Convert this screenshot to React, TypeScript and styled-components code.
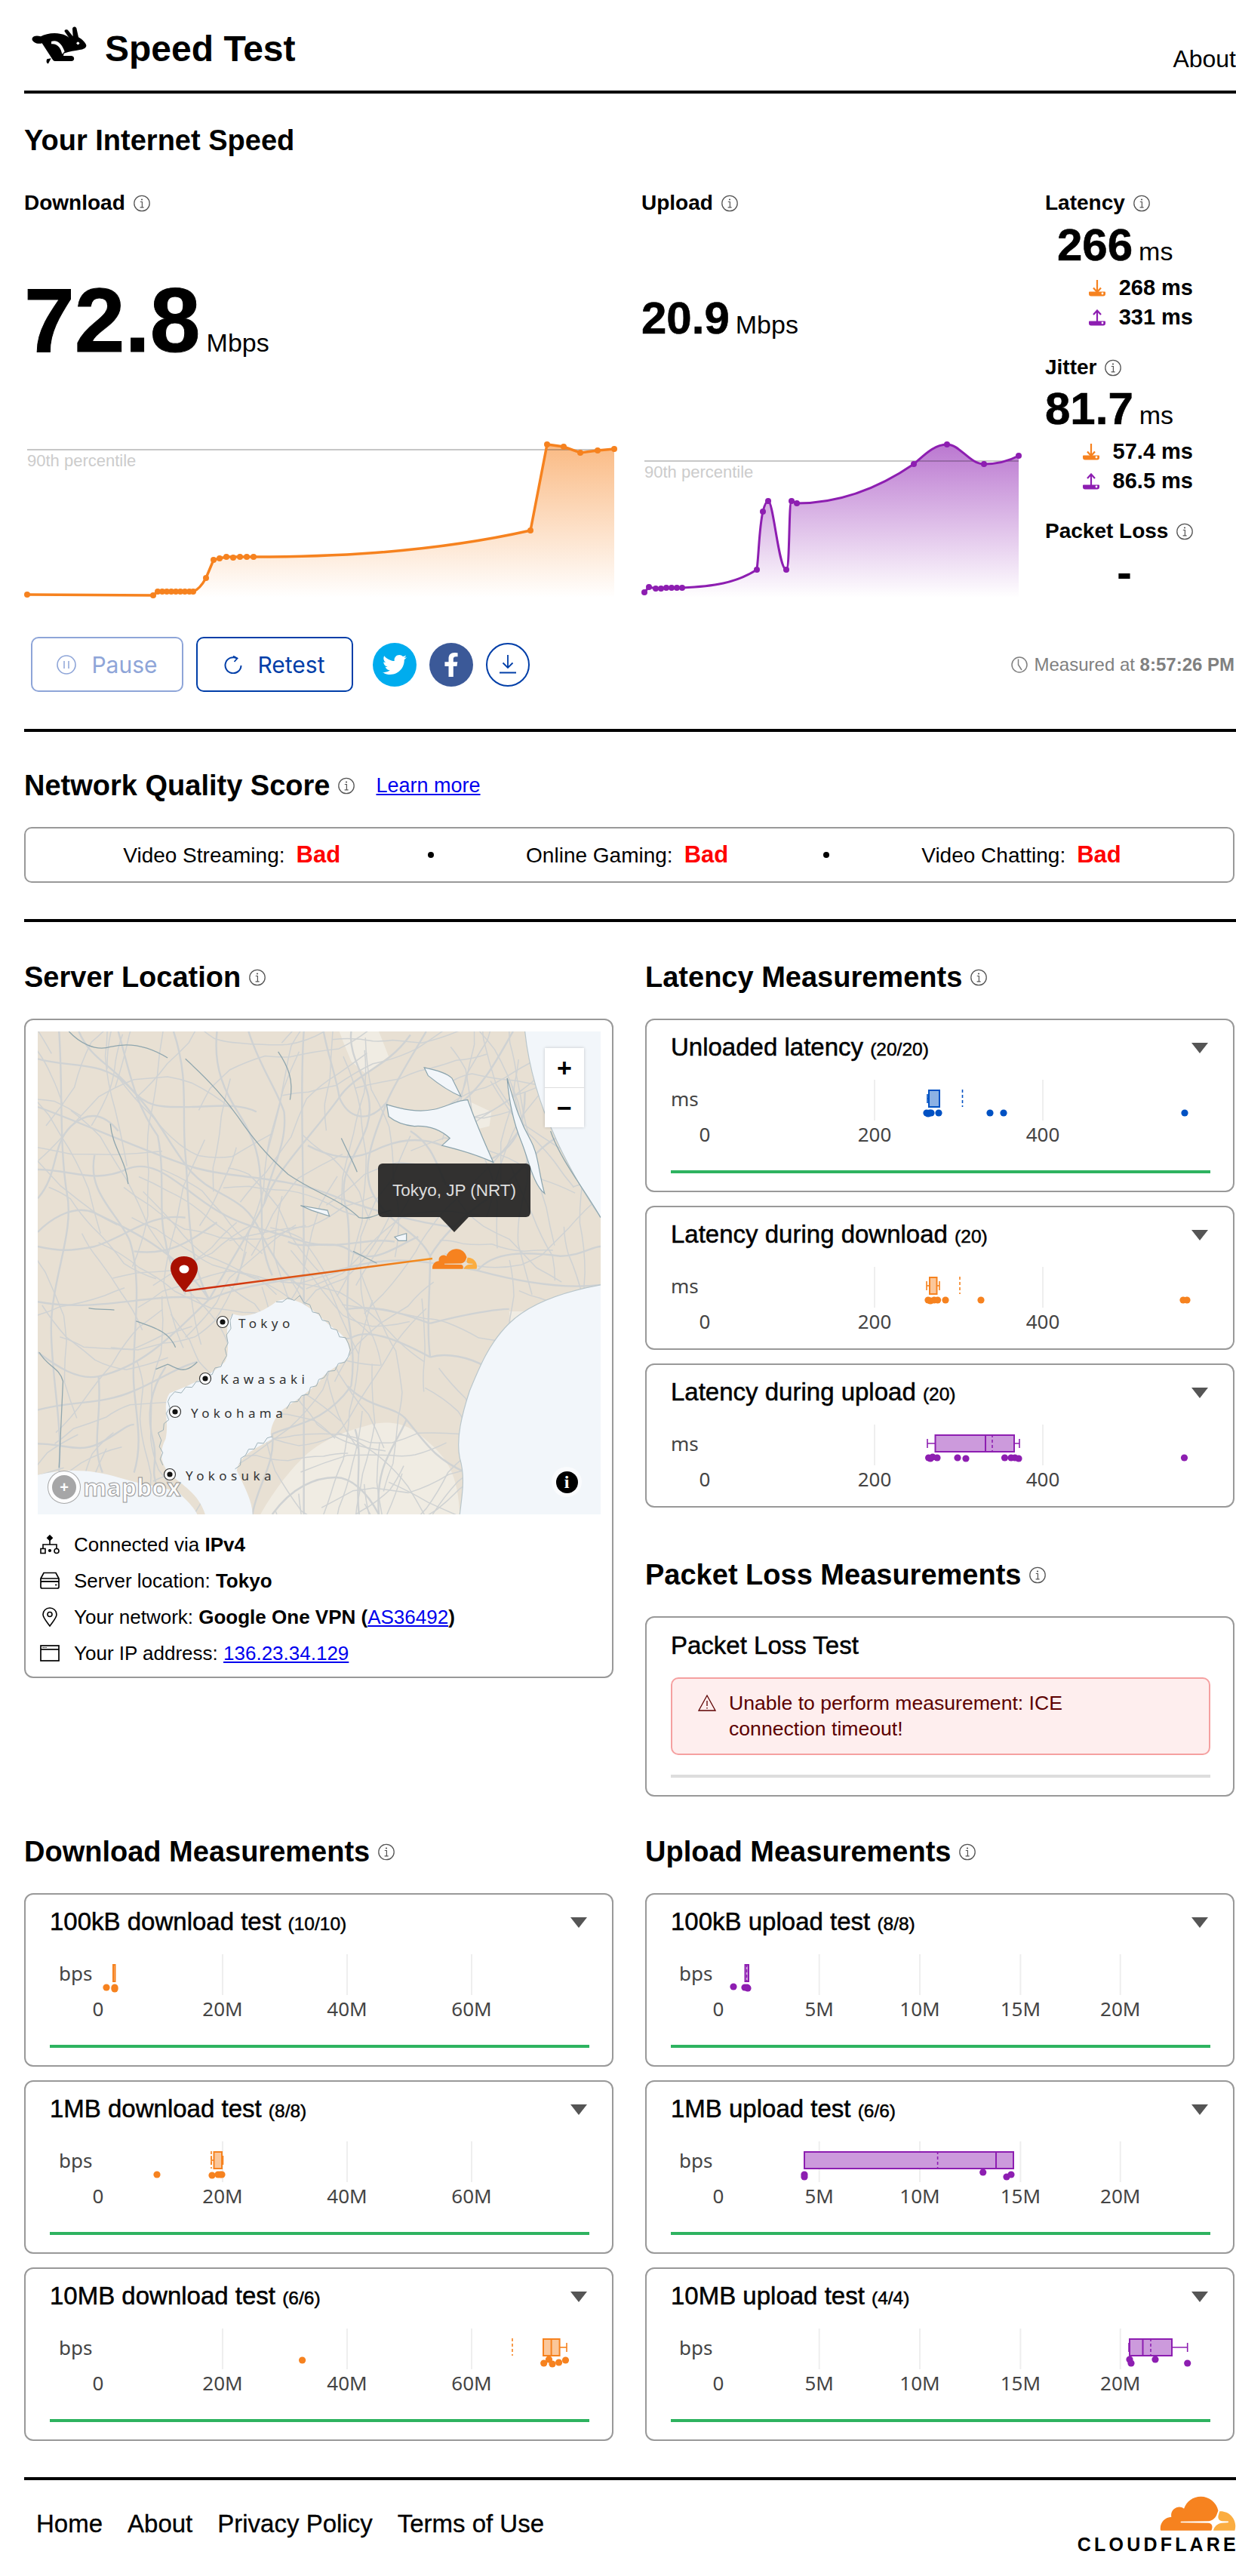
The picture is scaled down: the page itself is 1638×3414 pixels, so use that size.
import React from "react";
import styled, { createGlobalStyle } from "styled-components";
import { FaTwitter, FaFacebookF } from "react-icons/fa";

const GlobalStyle = createGlobalStyle`
  html, body { margin: 0; padding: 0; background: #fff; }
  body { font-family: "Liberation Sans", Arial, sans-serif; color: #000; }
  * { box-sizing: border-box; }
`;

const ORANGE = "#f6821f";
const PURPLE = "#8d1eb1";
const BLUE = "#0051c3";

const Page = styled.div`
  margin-left: 32px;
  width: 1606px;
`;
const Header = styled.header`
  height: 120px;
  display: flex;
  justify-content: space-between;
`;
const Brand = styled.div`
  display: flex;
  align-items: center;
  padding: 34px 0 0 10px;
  height: 86px;
  gap: 24px;
`;
const BrandTitle = styled.h1`
  margin: 10px 0 0;
  font-size: 48px;
  line-height: 56px;
  font-weight: 700;
`;
const HeaderLink = styled.a`
  font-size: 32px;
  line-height: 36px;
  margin-top: 60px;
`;
const Divider = styled.hr<{ $top: number }>`
  border: 0;
  height: 4px;
  background: #000;
  margin: ${(p) => p.$top}px 0 0;
`;
const SectionTitle = styled.h2<{ $top?: number }>`
  display: flex;
  align-items: center;
  gap: 11px;
  margin: ${(p) => p.$top ?? 0}px 0 0;
  font-size: 38px;
  line-height: 46px;
  font-weight: 700;
`;
const SpeedGrid = styled.div`
  display: grid;
  grid-template-columns: 818px 535px 1fr;
`;
const Metric = styled.div`
  display: flex;
  flex-direction: column;
  align-items: flex-start;
`;
const MetricLabel = styled.div<{ $top: number }>`
  display: flex;
  align-items: center;
  gap: 11px;
  margin-top: ${(p) => p.$top}px;
  font-size: 28px;
  line-height: 34px;
  font-weight: 700;
`;
const Reading = styled.div<{ $top: number; $indent?: number }>`
  display: flex;
  align-items: baseline;
  gap: 8px;
  margin-top: ${(p) => p.$top}px;
  padding-left: ${(p) => p.$indent ?? 0}px;
`;
const BigNumber = styled.span<{ $size: number }>`
  font-size: ${(p) => p.$size}px;
  line-height: ${(p) => p.$size}px;
  font-weight: 700;
  -webkit-text-stroke: ${(p) => (p.$size > 100 ? 1 : 0.6)}px #000;
`;
const Unit = styled.span`
  font-size: 34px;
  line-height: 34px;
`;
const AreaChart = styled.svg<{ $top: number }>`
  display: block;
  margin-top: ${(p) => p.$top}px;
  overflow: visible;
`;
const ChartCaption = styled.text`
  font-size: 22px;
  fill: #ccc;
`;
const Stats = styled.div`
  display: flex;
  flex-direction: column;
`;
const SubRow = styled.div<{ $top?: number }>`
  display: flex;
  align-items: center;
  justify-content: flex-end;
  height: 39px;
  width: 196px;
  margin-top: ${(p) => p.$top ?? 0}px;
  font-size: 29px;
  font-weight: 700;
  gap: 10px;
`;
const SubIcon = styled.svg`
  width: 22px;
  height: 22px;
  margin-right: 8px;
  flex: none;
`;
const Dash = styled.div`
  margin-top: 8px;
  padding-left: 95px;
  font-size: 60px;
  line-height: 60px;
  font-weight: 700;
`;
const Actions = styled.div`
  display: flex;
  align-items: center;
  margin-top: 44px;
  padding: 0 2px 0 9px;
  height: 73px;
`;
const ActionButton = styled.button<{ $muted?: boolean; $width: number }>`
  display: flex;
  align-items: center;
  justify-content: center;
  gap: 20px;
  width: ${(p) => p.$width}px;
  height: 73px;
  margin-right: 17px;
  background: #fff;
  border: 2px solid ${(p) => (p.$muted ? "#8ea5d8" : "#003ea8")};
  border-radius: 10px;
  color: ${(p) => (p.$muted ? "#8ea5d8" : "#003ea8")};
  font-family: Inter, "Liberation Sans", sans-serif;
  font-size: 30px;
  padding: 0;
`;
const RoundButton = styled.div<{ $bg: string; $outline?: boolean }>`
  width: 58px;
  height: 58px;
  margin-right: 17px;
  border-radius: 50%;
  display: flex;
  align-items: center;
  justify-content: center;
  background: ${(p) => p.$bg};
  border: ${(p) => (p.$outline ? "2px solid #003ea8" : "0")};
  color: #fff;
  font-size: 32px;
`;
const ShareGap = styled.div`
  width: 9px;
`;
const Measured = styled.div`
  margin-left: auto;
  display: flex;
  align-items: center;
  gap: 9px;
  font-size: 24px;
  color: #808080;
`;
const LearnMore = styled.a`
  margin-left: 17px;
  font-size: 27px;
  font-weight: 400;
  color: #0000ee;
  text-decoration: underline;
`;
const ScoreBox = styled.div`
  display: flex;
  align-items: center;
  justify-content: center;
  gap: 122px;
  width: 1604px;
  height: 74px;
  margin-top: 32px;
  padding-right: 19px;
  border: 2px solid #999;
  border-radius: 10px;
  font-size: 28px;
`;
const ScoreItem = styled.div`
  display: flex;
  align-items: baseline;
  gap: 15px;
`;
const ScoreBad = styled.span`
  font-size: 31px;
  font-weight: 700;
  color: #f00;
`;
const Bullet = styled.span<{ $shift: number }>`
  width: 8px;
  height: 8px;
  margin-left: ${(p) => p.$shift}px;
  border-radius: 50%;
  background: #000;
`;
const Columns = styled.div<{ $top: number }>`
  display: grid;
  grid-template-columns: 781px 781px;
  column-gap: 42px;
  margin-top: ${(p) => p.$top}px;
`;
const Column = styled.div`
  display: flex;
  flex-direction: column;
  align-items: stretch;
`;
const Card = styled.section<{ $top?: number }>`
  border: 2px solid #999;
  border-radius: 12px;
  margin-top: ${(p) => p.$top ?? 18}px;
  padding: 16px 30px 18px 32px;
`;
const MapCard = styled.section`
  margin-top: 32px;
  border: 2px solid #999;
  border-radius: 12px;
  padding: 15px 15px 7px 16px;
`;
const MapFrame = styled.div`
  position: relative;
  width: 746px;
  height: 640px;
  overflow: hidden;
  background: #e8e0d3;
`;
const MapArt = styled.svg`
  display: block;
`;
const CityLabel = styled.text`
  font-family: "Noto Sans", sans-serif;
  font-size: 17px;
  letter-spacing: 5.4px;
  fill: #333;
`;
const ZoomControl = styled.div`
  position: absolute;
  left: 672px;
  top: 22px;
  width: 52px;
  height: 105px;
  background: #fff;
  box-shadow: 0 0 4px rgba(0, 0, 0, 0.2);
  display: flex;
  flex-direction: column;
  font-size: 34px;
  font-weight: 700;
`;
const ZoomKey = styled.div`
  flex: 1;
  display: flex;
  align-items: center;
  justify-content: center;
  & + & { border-top: 1px solid #ddd; }
`;
const MapTip = styled.div`
  position: absolute;
  left: 451px;
  top: 175px;
  width: 202px;
  height: 71px;
  background: rgba(34, 34, 34, 0.92);
  border-radius: 6px;
  color: #ddd;
  font-size: 22.5px;
  display: flex;
  align-items: center;
  justify-content: center;
  &::after {
    content: "";
    position: absolute;
    left: 82px;
    top: 71px;
    border-left: 19px solid transparent;
    border-right: 19px solid transparent;
    border-top: 20px solid rgba(34, 34, 34, 0.92);
  }
`;
const MapInfo = styled.div`
  position: absolute;
  left: 681px;
  top: 577px;
  width: 40px;
  height: 40px;
  border-radius: 50%;
  background: rgba(255, 255, 255, 0.6);
  display: flex;
  align-items: center;
  justify-content: center;
`;
const MapInfoDot = styled.div`
  width: 29px;
  height: 29px;
  border-radius: 50%;
  background: #000;
  color: #fff;
  font-family: "Liberation Serif", serif;
  font-weight: 700;
  font-size: 24px;
  display: flex;
  align-items: center;
  justify-content: center;
`;
const MapLogo = styled.div`
  position: absolute;
  left: 14px;
  top: 583px;
  display: flex;
  align-items: center;
  gap: 4px;
  opacity: 0.85;
`;
const MapLogoMark = styled.div`
  width: 42px;
  height: 42px;
  border-radius: 50%;
  border: 5px solid #fff;
  box-shadow: 0 0 0 1px #999;
  background: #999;
  color: #fff;
  font-weight: 700;
  font-size: 20px;
  display: flex;
  align-items: center;
  justify-content: center;
`;
const MapLogoWord = styled.span`
  font-family: "Open Sans", sans-serif;
  font-weight: 700;
  font-size: 32px;
  line-height: 42px;
  color: #fff;
  -webkit-text-stroke: 1px #888;
`;
const FactList = styled.div`
  margin-top: 16px;
  display: flex;
  flex-direction: column;
  font-size: 26px;
`;
const Fact = styled.div`
  display: flex;
  align-items: center;
  height: 48px;
  padding-left: 3px;
  gap: 19px;
`;
const FactIcon = styled.svg`
  width: 26px;
  height: 26px;
  flex: none;
`;
const Link = styled.a`
  color: #0000ee;
  text-decoration: underline;
`;
const CardHead = styled.div`
  display: flex;
  align-items: center;
  justify-content: space-between;
  height: 42px;
  padding-right: 3px;
`;
const CardTitle = styled.h3`
  margin: 0;
  font-size: 33px;
  line-height: 42px;
  font-weight: 400;
  -webkit-text-stroke: 0.5px #000;
`;
const CardCount = styled.span`
  font-size: 24.5px;
`;
const Caret = styled.span`
  width: 0;
  height: 0;
  border-left: 11.5px solid transparent;
  border-right: 11.5px solid transparent;
  border-top: 14px solid #555;
`;
const PlotSvg = styled.svg`
  display: block;
  width: 100%;
  height: 90px;
  margin-top: 21px;
  overflow: visible;
`;
const PlotText = styled.text`
  font-family: "Noto Sans", sans-serif;
  font-size: 26px;
  fill: #444;
  dominant-baseline: central;
`;
const Progress = styled.div<{ $color: string; $top: number }>`
  height: 4px;
  margin: ${(p) => p.$top}px 0 5px;
  background: ${(p) => p.$color};
`;
const Alert = styled.div`
  display: flex;
  gap: 17px;
  height: 103px;
  margin-top: 21px;
  padding: 15px 90px 0 34px;
  background: #feeeee;
  border: 2px solid #f5a0a0;
  border-radius: 10px;
  color: #5c0000;
  font-size: 26.6px;
  line-height: 34px;
`;
const AlertIcon = styled.svg`
  width: 24px;
  height: 24px;
  margin-top: 5px;
  flex: none;
`;
const Footer = styled.footer`
  display: flex;
  justify-content: space-between;
  height: 130px;
`;
const FooterLinks = styled.nav`
  display: flex;
  gap: 33px;
  padding: 38px 0 0 16px;
  font-size: 33px;
  line-height: 40px;
  -webkit-text-stroke: 0.3px #000;
`;
const FooterLogo = styled.div`
  display: flex;
  flex-direction: column;
  align-items: flex-end;
  padding-top: 21px;
`;
const FooterCloud = styled.svg`
  display: block;
  width: 101px;
  height: 46px;
`;
const LogoWord = styled.span`
  font-size: 25px;
  line-height: 26px;
  margin: 5px -4px 0 0;
  font-weight: 700;
  letter-spacing: 4.2px;
`;

function Info() {
  return (
    <svg width="22" height="23" viewBox="0 0 22 23" fill="none" style={{ flex: "none" }}>
      <circle cx="11" cy="11.5" r="10.2" stroke="#555" strokeWidth="1.3" />
      <circle cx="11" cy="6.5" r="1.1" fill="#555" />
      <path d="M8.8 9.5H11.4V16.5M8.6 16.8H13.6" stroke="#555" strokeWidth="1.2" />
    </svg>
  );
}

function Tray({ color, up }: { color: string; up?: boolean }) {
  return (
    <SubIcon viewBox="0 0 22 22">
      <path d="M1 15.5h20a1 1 0 0 1 1 1v2a3 3 0 0 1-3 3H3a3 3 0 0 1-3-3v-2a1 1 0 0 1 1-1z" fill={color} />
      <circle cx="18" cy="18" r="1.4" fill="#fff" />
      {up ? (
        <path d="M11 18V2M6 7l5-5.5L16 7" stroke={color} strokeWidth="2.2" fill="none" />
      ) : (
        <path d="M11 0V16M6 10.5l5 5.5 5-5.5" stroke={color} strokeWidth="2.2" fill="none" />
      )}
    </SubIcon>
  );
}

const cloudA =
  "M16.5088 16.8447c.1475-.5068.0908-.9707-.1553-1.3154-.2246-.3164-.6045-.4941-1.0615-.5186l-8.6592-.1123a.1559.1559 0 0 1-.1333-.0713c-.0283-.042-.0351-.0986-.021-.1553.0278-.084.1123-.1484.2036-.1562l8.7359-.1123c1.0351-.0489 2.1601-.8868 2.5537-1.9136l.499-1.3013c.0215-.0561.0293-.1128.0147-.168-.5625-2.5463-2.835-4.4453-5.5499-4.4453-2.5039 0-4.6284 1.6177-5.3876 3.8614-.4927-.3658-1.1187-.5625-1.794-.499-1.2026.119-2.1665 1.083-2.2861 2.2856-.0283.31-.0069.6128.0635.894C1.5683 13.171 0 14.7754 0 16.752c0 .1748.0142.3515.0352.5273.0141.083.0844.1475.1689.1475h15.9814c.0909 0 .1758-.0645.2032-.1553l.12-.4268z";
const cloudB =
  "M19.2656 11.2813c-.0771 0-.1611 0-.2383.0112-.0566 0-.1054.0415-.127.0976l-.3378 1.1744c-.1475.5068-.0918.9707.1543 1.3164.2256.3164.6055.4941 1.0625.5186l1.8437.1123c.0557 0 .1055.0283.1329.0713.0283.042.0351.1059.021.1553-.0278.084-.1123.1484-.2036.1562l-1.9158.1123c-1.0351.0489-2.1601.8868-2.5537 1.9136l-.1406.3585c-.0283.0713.0215.1416.0986.1416h6.5977c.0771 0 .1474-.0489.169-.126.1122-.4082.1757-.837.1757-1.2803 0-2.6025-2.125-4.727-4.7344-4.727";

const dlPts: [number, number][] = [
  [36, 788], [203, 789], [209, 784], [215, 784], [221, 784], [227, 784], [233, 784], [239, 784], [245, 784], [251, 784], [256, 784],
  [273, 766], [283, 742], [291, 740], [300, 738], [309, 739], [318, 738], [327, 738], [336, 738],
  [703, 703], [725, 589], [747, 592], [769, 600], [792, 597], [814, 595],
];
const dlLine =
  "M36 788L203 789L209 784L256 784C262 782 268 775 273 766L283 742L291 740L300 738L336 738C420 738 560 735 703 703L725 589L747 592L769 600L792 597L814 595";
const ulPts: [number, number][] = [
  [854, 785], [860, 778], [869, 780], [876, 780], [883, 779], [890, 779], [897, 779], [904, 779],
  [1003, 755], [1011, 678], [1018, 664], [1042, 755], [1049, 664], [1056, 667], [1211, 615], [1255, 589], [1304, 615], [1350, 604],
];
const ulLine =
  "M854 785L860 778L869 780L904 779C945 777 975 773 1003 755C1006 730 1006 700 1011 678C1013 670 1015 664 1018 664C1025 664 1032 755 1042 755C1047 755 1045 664 1049 664L1056 667C1110 667 1160 650 1211 615C1225 603 1238 589 1255 589C1272 589 1285 615 1304 615C1320 615 1335 612 1350 604";

type Plot = {
  color: string;
  box?: [number, number];
  whisker?: [number, number];
  median?: number;
  mean?: number;
  points: [number, number][];
};
type Axis = { ticks: [number, string][]; grid: number[]; unit: string; unitX: number };

const latencyAxis: Axis = { ticks: [[45, "0"], [270, "200"], [493, "400"]], grid: [270, 493], unit: "ms", unitX: 0 };
const downAxis: Axis = { ticks: [[64, "0"], [229, "20M"], [394, "40M"], [559, "60M"]], grid: [229, 394, 559], unit: "bps", unitX: 12 };
const upAxis: Axis = {
  ticks: [[63, "0"], [196.7, "5M"], [330, "10M"], [463.4, "15M"], [595.7, "20M"]],
  grid: [196.7, 330, 463.4, 595.7],
  unit: "bps",
  unitX: 11,
};

function BoxPlot({ axis, plot }: { axis: Axis; plot: Plot }) {
  const { color, box, whisker, median, mean, points } = plot;
  return (
    <PlotSvg>
      {axis.grid.map((x) => (
        <line key={x} x1={x} x2={x} y1={0} y2={54} stroke="#eee" strokeWidth="2" />
      ))}
      <PlotText x={axis.unitX} y={25}>{axis.unit}</PlotText>
      {axis.ticks.map(([x, label]) => (
        <PlotText key={label} x={x} y={72} textAnchor="middle">{label}</PlotText>
      ))}
      {whisker && (
        <g stroke={color} strokeWidth="1.6">
          <line x1={whisker[0]} x2={whisker[1]} y1={25} y2={25} />
          <line x1={whisker[0]} x2={whisker[0]} y1={19} y2={31} />
          <line x1={whisker[1]} x2={whisker[1]} y1={19} y2={31} />
        </g>
      )}
      {box && (
        <rect x={box[0]} y={14} width={box[1] - box[0]} height={22} fill="#fff" />
      )}
      {box && (
        <rect x={box[0]} y={14} width={box[1] - box[0]} height={22} fill={color} fillOpacity="0.45" stroke={color} strokeWidth="2" />
      )}
      {median !== undefined && <line x1={median} x2={median} y1={14} y2={36} stroke={color} strokeWidth="2" />}
      {mean !== undefined && <line x1={mean} x2={mean} y1={13} y2={36} stroke={color} strokeWidth="1.6" strokeDasharray="4 3" />}
      {points.map(([x, y], i) => (
        <circle key={i} cx={x} cy={y} r="4.6" fill={color} />
      ))}
    </PlotSvg>
  );
}

function MeasureCard({ title, count, axis, plot, done = true, top }: { title: string; count: string; axis: Axis; plot: Plot; done?: boolean; top?: number }) {
  return (
    <Card $top={top}>
      <CardHead>
        <CardTitle>
          {title} <CardCount>{count}</CardCount>
        </CardTitle>
        <Caret />
      </CardHead>
      <BoxPlot axis={axis} plot={plot} />
      {done && <Progress $color="#2eb360" $top={30} />}
    </Card>
  );
}

const roads = [
  "M530 740C470 650 480 520 470 440C460 350 480 280 440 183",
  "M530 740C600 640 660 560 670 540C700 470 790 400 860 320C900 270 980 260 1040 190",
  "M530 740C640 700 780 700 900 670C1000 650 1080 660 1210 680C1300 700 1420 720 1522 710",
  "M530 740C400 720 260 770 96 745",
  "M530 740C450 640 340 600 240 560C180 540 120 580 96 600",
  "M530 740C430 820 360 880 250 900C190 910 130 870 96 850",
  "M96 340C200 370 330 420 470 460C570 490 700 480 830 520C920 550 1050 580 1150 590",
  "M96 240C180 260 260 240 330 300C400 360 430 420 480 470C540 530 620 520 660 600C690 650 720 690 770 720",
  "M150 183C160 300 150 420 170 520C190 600 130 700 130 800C130 900 160 1000 150 1100",
  "M300 183C330 270 340 330 400 400C420 480 400 560 420 620C430 680 460 700 470 730",
  "M550 183C540 260 570 310 610 360C640 400 660 440 660 500C670 560 650 620 690 690",
  "M96 470C180 470 240 500 320 470C400 440 470 520 560 560C620 590 700 600 770 620C860 640 920 610 1000 620",
  "M240 440C220 520 300 560 330 620C360 700 340 800 340 860C330 950 370 1020 340 1100",
  "M250 900C260 980 230 1040 260 1100",
  "M96 970C180 950 260 960 340 930C400 910 450 880 500 870",
  "M420 880C380 930 370 980 390 1040C400 1080 380 1100 400 1130",
  "M770 183C760 300 770 500 770 640C770 800 770 1000 770 1187",
  "M890 183C880 250 960 300 930 380C900 450 850 480 880 560C890 620 880 700 880 760C890 820 900 860 890 920",
  "M1080 183C1040 240 1000 290 980 330C950 400 900 480 960 540C1000 590 1060 600 1090 650C1090 720 1080 800 1090 860",
  "M1090 650C1120 610 1170 570 1220 540C1300 500 1360 420 1420 400",
  "M1090 860C1000 820 930 800 890 820C850 830 830 790 810 780",
  "M1090 860C1130 850 1190 860 1230 880",
  "M880 920C940 970 1000 960 1030 990C1000 1050 950 1080 960 1187",
  "M890 920C820 1000 740 1000 690 1020C700 1080 650 1130 640 1187",
  "M1210 680C1250 640 1330 640 1420 650C1470 650 1500 630 1522 630",
  "M1170 330C1230 290 1260 240 1300 183",
  "M1040 390C1100 420 1110 470 1130 500",
  "M1240 450C1320 420 1330 360 1330 310",
  "M96 630C150 640 180 640 240 630C320 610 380 560 470 570",
  "M630 183C660 260 700 300 720 350C730 420 680 480 670 540",
  "M200 183C230 240 280 250 330 300C370 340 400 340 470 340C540 340 600 330 650 350",
  "M820 183C830 230 850 270 860 320C880 360 930 380 980 330",
  "M96 1040C160 1040 200 1060 250 1040C300 1020 320 1000 340 1000",
  "M880 760C960 750 1020 770 1090 790",
  "M1090 790C1180 770 1260 760 1290 760",
  "M96 530C150 480 130 420 180 380C220 350 260 350 300 390",
  "M550 580C480 620 430 650 340 640",
  "M780 420C850 450 900 450 950 430C1000 410 1060 400 1120 420",
  "M730 620C780 640 840 610 890 640C950 670 1000 630 1060 610",
  "M910 1187C900 1120 920 1060 900 1010",
  "M1030 990C1080 1040 1100 1070 1180 1100",
  "M690 1187C740 1130 800 1110 850 1110C890 1110 930 1140 960 1187",
];

function makeRoads(count: number): string[] {
  let seed = 20240117;
  const rnd = () => {
    seed = (seed * 1664525 + 1013904223) >>> 0;
    return seed / 4294967296;
  };
  const out: string[] = [];
  for (let i = 0; i < count; i += 1) {
    let x = 96 + rnd() * 1426;
    let y = 183 + rnd() * 1004;
    let angle = rnd() * Math.PI * 2;
    let d = `M${x.toFixed(0)} ${y.toFixed(0)}`;
    const steps = 3 + Math.floor(rnd() * 4);
    for (let s = 0; s < steps; s += 1) {
      const len = 45 + rnd() * 70;
      const a1 = angle + (rnd() - 0.5) * 0.8;
      const cx = x + Math.cos(a1) * len * 0.55;
      const cy = y + Math.sin(a1) * len * 0.55;
      angle = a1 + (rnd() - 0.5) * 0.6;
      x = cx + Math.cos(angle) * len * 0.55;
      y = cy + Math.sin(angle) * len * 0.55;
      d += `Q${cx.toFixed(0)} ${cy.toFixed(0)} ${x.toFixed(0)} ${y.toFixed(0)}`;
    }
    out.push(d);
  }
  return out;
}
const sideRoads = makeRoads(150);

function jag(points: [number, number][], amp: number): string {
  let d = `M${points[0][0]} ${points[0][1]}`;
  let flip = 1;
  for (let i = 1; i < points.length; i += 1) {
    const [x0, y0] = points[i - 1];
    const [x1, y1] = points[i];
    const len = Math.hypot(x1 - x0, y1 - y0);
    const n = Math.max(2, Math.round(len / 14));
    for (let k = 1; k <= n; k += 1) {
      const t = k / n;
      const off = k % 3 === 0 ? amp * flip * 1.6 : amp * flip;
      flip = -flip;
      const px = x0 + (x1 - x0) * t + (-(y1 - y0) / len) * off;
      const py = y0 + (y1 - y0) * t + ((x1 - x0) / len) * off;
      d += `L${px.toFixed(1)} ${py.toFixed(1)}`;
    }
  }
  return d;
}
const bayCoasts = [
  jag([[700, 745], [760, 735], [830, 790], [885, 830], [885, 860], [820, 900], [780, 935], [725, 965]], 3),
  jag([[590, 770], [575, 830], [570, 870], [500, 915], [430, 940], [425, 990], [405, 1020], [410, 1085]], 3),
  jag([[690, 1025], [620, 1060], [600, 1095]], 3),
];

const rivers = [
  "M175 183C200 205 240 225 280 215C330 205 380 215 425 238",
  "M705 225C730 255 745 285 735 325",
  "M280 375C285 425 320 450 325 500",
  "M470 240C530 285 570 320 620 380C660 425 690 450 730 480C800 520 860 530 910 570C940 575 960 560 990 555",
  "M865 405C885 440 895 455 905 475",
  "M1395 390C1420 450 1480 510 1522 570",
  "M225 758C250 762 270 760 290 762",
  "M345 785C400 800 430 810 445 840",
  "M100 850C120 880 150 880 160 910L150 1090",
  "M895 640L955 665",
  "M395 885L425 875C445 880 465 900 500 870",
];
const lakes = [
  "M980 335C1020 345 1060 352 1100 345C1130 340 1160 325 1185 325C1200 360 1220 400 1250 455C1210 440 1170 430 1120 420L1140 405C1120 390 1090 378 1050 380C1020 378 1000 370 985 360Z",
  "M1075 258C1100 262 1130 268 1145 280L1168 318C1130 305 1100 285 1085 275Z",
  "M1285 280C1300 320 1310 360 1345 410C1365 440 1365 480 1380 520C1350 500 1340 450 1320 410C1300 370 1290 330 1285 280Z",
  "M762 545L830 555L835 567L790 555Z",
  "M1000 610L1030 603L1030 618L1010 618Z",
];
const reliefs = [
  "M860 183L960 183L985 235L925 270L890 245L870 205Z",
  "M1180 325L1245 350L1240 380L1215 385Z",
  "M1290 765L1350 765L1320 795L1295 790Z",
  "M780 1060C840 1020 900 1010 940 1000C1000 990 1040 1000 1090 1040C1130 1070 1160 1100 1165 1187L660 1187C700 1130 740 1090 780 1060Z",
];

export default function App() {
  return (
    <Page>
      <GlobalStyle />
      <Header>
        <Brand>
          <svg width="73" height="50" viewBox="65 105 217 150">
            <path d="M100 145C120 135 150 128 180 135C195 138 205 143 212 150L195 125C192 118 205 115 210 122L228 145L226 115C226 105 238 103 242 112L250 148C262 155 278 168 281 180C282 190 270 196 255 198C235 202 215 204 192 212L190 222L222 222C236 223 236 243 222 243L160 243C150 243 148 238 143 230L105 172C85 178 62 165 66 152C70 142 85 140 100 145Z" fill="#000" />
            <path d="M142 165C165 155 185 175 195 205L185 215C180 190 165 172 142 175Z" fill="#fff" />
            <circle cx="248" cy="172" r="5.5" fill="#fff" />
            <path d="M125 235L141 232L130 253C124 253 120 245 125 235Z" fill="#000" />
          </svg>
          <BrandTitle>Speed Test</BrandTitle>
        </Brand>
        <HeaderLink>About</HeaderLink>
      </Header>
      <Divider $top={0} />
      <SectionTitle $top={39}>Your Internet Speed</SectionTitle>

      <SpeedGrid>
        <Metric>
          <MetricLabel $top={43}>Download <Info /></MetricLabel>
          <Reading $top={78}>
            <BigNumber $size={120}>72.8</BigNumber>
            <Unit>Mbps</Unit>
          </Reading>
          <AreaChart $top={96} width="790" height="220" viewBox="32 580 790 220">
            <defs>
              <linearGradient id="dlFill" gradientUnits="userSpaceOnUse" x1="0" x2="0" y1="589" y2="792">
                <stop offset="0" stopColor={ORANGE} stopOpacity="0.55" />
                <stop offset="1" stopColor={ORANGE} stopOpacity="0" />
              </linearGradient>
            </defs>
            <path d={`${dlLine}L814 792L36 792Z`} fill="url(#dlFill)" />
            <line x1="36" x2="815" y1="596" y2="596" stroke="#000" strokeOpacity="0.22" strokeWidth="2" />
            <ChartCaption x="36" y="618">90th percentile</ChartCaption>
            <path d={dlLine} fill="none" stroke={ORANGE} strokeWidth="3.5" />
            {dlPts.map(([x, y]) => (
              <circle key={x} cx={x} cy={y} r="4" fill={ORANGE} />
            ))}
          </AreaChart>
        </Metric>

        <Metric>
          <MetricLabel $top={43}>Upload <Info /></MetricLabel>
          <Reading $top={106}>
            <BigNumber $size={60}>20.9</BigNumber>
            <Unit>Mbps</Unit>
          </Reading>
          <AreaChart $top={128} width="510" height="220" viewBox="850 580 510 220">
            <defs>
              <linearGradient id="ulFill" gradientUnits="userSpaceOnUse" x1="0" x2="0" y1="589" y2="792">
                <stop offset="0" stopColor={PURPLE} stopOpacity="0.6" />
                <stop offset="1" stopColor={PURPLE} stopOpacity="0" />
              </linearGradient>
            </defs>
            <path d={`${ulLine}L1350 792L854 792Z`} fill="url(#ulFill)" />
            <line x1="854" x2="1350" y1="611" y2="611" stroke="#000" strokeOpacity="0.22" strokeWidth="2" />
            <ChartCaption x="854" y="633">90th percentile</ChartCaption>
            <path d={ulLine} fill="none" stroke={PURPLE} strokeWidth="3" />
            {ulPts.map(([x, y]) => (
              <circle key={x} cx={x} cy={y} r="4" fill={PURPLE} />
            ))}
          </AreaChart>
        </Metric>

        <Stats>
          <MetricLabel $top={43}>Latency <Info /></MetricLabel>
          <Reading $top={9} $indent={16}>
            <BigNumber $size={60}>266</BigNumber>
            <Unit>ms</Unit>
          </Reading>
          <SubRow $top={7}><Tray color={ORANGE} />268 ms</SubRow>
          <SubRow><Tray color={PURPLE} up />331 ms</SubRow>
          <MetricLabel $top={30}>Jitter <Info /></MetricLabel>
          <Reading $top={8}>
            <BigNumber $size={60}>81.7</BigNumber>
            <Unit>ms</Unit>
          </Reading>
          <SubRow $top={7}><Tray color={ORANGE} />57.4 ms</SubRow>
          <SubRow><Tray color={PURPLE} up />86.5 ms</SubRow>
          <MetricLabel $top={30}>Packet Loss <Info /></MetricLabel>
          <Dash>-</Dash>
        </Stats>
      </SpeedGrid>

      <Actions>
        <ActionButton $muted $width={202}>
          <svg width="26" height="26" viewBox="0 0 26 26" fill="none" stroke="#8ea5d8" strokeWidth="1.6">
            <circle cx="13" cy="13" r="12" />
            <path d="M10 8v10M16 8v10" strokeWidth="1.5" />
          </svg>
          Pause
        </ActionButton>
        <ActionButton $width={208}>
          <svg width="24" height="24" viewBox="0 0 24 24" fill="none" stroke="#003ea8" strokeWidth="2">
            <path d="M17 3.5A10.5 10.5 0 1 0 22.5 13" />
            <path d="M12 0.5l5.5 3-4 4.5" strokeWidth="1.8" />
          </svg>
          Retest
        </ActionButton>
        <ShareGap />
        <RoundButton $bg="#00acee"><FaTwitter /></RoundButton>
        <RoundButton $bg="#3b5998"><FaFacebookF /></RoundButton>
        <RoundButton $bg="#fff" $outline>
          <svg width="22" height="25" viewBox="0 0 22 25" fill="none" stroke="#003ea8" strokeWidth="1.8">
            <path d="M11 0V17M4.5 10.5L11 17l6.5-6.5M0 23.5H22" />
          </svg>
        </RoundButton>
        <Measured>
          <svg width="22" height="24" viewBox="0 0 22 24" fill="none" stroke="#808080" strokeWidth="1.5">
            <circle cx="11" cy="12" r="10" />
            <path d="M9.5 4.5V12L14 19" />
          </svg>
          <span>Measured at <b>8:57:26 PM</b></span>
        </Measured>
      </Actions>

      <Divider $top={49} />

      <SectionTitle $top={48}>
        Network Quality Score <Info />
        <LearnMore>Learn more</LearnMore>
      </SectionTitle>
      <ScoreBox>
        <ScoreItem>Video Streaming: <ScoreBad>Bad</ScoreBad></ScoreItem>
        <Bullet $shift={-6} />
        <ScoreItem>Online Gaming: <ScoreBad>Bad</ScoreBad></ScoreItem>
        <Bullet $shift={4} />
        <ScoreItem>Video Chatting: <ScoreBad>Bad</ScoreBad></ScoreItem>
      </ScoreBox>

      <Divider $top={48} />

      <Columns $top={50}>
        <Column>
          <SectionTitle>Server Location <Info /></SectionTitle>
          <MapCard>
            <MapFrame>
              <MapArt width="746" height="640" viewBox="0 0 746 640">
                <defs>
                  <linearGradient id="linkLine" gradientUnits="userSpaceOnUse" x1="195" x2="523" y1="344" y2="301">
                    <stop offset="0" stopColor="#c8200c" />
                    <stop offset="1" stopColor="#f6921f" />
                  </linearGradient>
                </defs>
                <g transform="scale(0.5232 0.6375) translate(-96 -183)">
                  <g fill="#f0ece3">
                    {reliefs.map((d) => <path key={d} d={d} />)}
                  </g>
                  <g fill="none" stroke="#cfd2d3">
                    {sideRoads.map((d) => <path key={d} d={d} strokeWidth="1.5" vectorEffect="non-scaling-stroke" />)}
                    {roads.map((d) => <path key={d} d={d} strokeWidth="2.4" vectorEffect="non-scaling-stroke" />)}
                  </g>
                  <g fill="#f2f6fa">
                    <path d="M1330 183C1340 260 1370 340 1400 390C1430 450 1480 520 1522 570L1522 183Z" />
                    <path d="M1522 710C1420 725 1340 750 1290 790C1240 830 1215 880 1190 930C1170 980 1155 1030 1165 1070C1180 1110 1170 1150 1165 1187L1522 1187Z" />
                    <path d="M700 745C740 730 780 750 830 790C860 810 890 820 885 860C860 880 830 885 810 910C780 935 740 955 715 970C690 990 680 1020 690 1030C650 1050 610 1060 600 1095C620 1130 640 1160 640 1187L520 1187C510 1160 490 1140 440 1110C410 1090 400 1060 420 1030C430 990 410 960 430 935C480 920 530 900 570 870C590 840 560 800 590 770C620 780 660 770 700 745Z" />
                    <path d="M96 1105C170 1090 240 1095 300 1110C360 1125 410 1130 450 1140C470 1155 490 1170 500 1187L96 1187Z" />
                  </g>
                  <path d="M1330 183C1340 260 1370 340 1400 390C1430 450 1480 520 1522 570M1522 710C1420 725 1340 750 1290 790C1240 830 1215 880 1190 930C1170 980 1155 1030 1165 1070C1180 1110 1170 1150 1165 1187" fill="none" stroke="#b9c6cb" strokeWidth="1.2" vectorEffect="non-scaling-stroke" />
                  <g fill="#f2f6fa" stroke="#8aa3ad">
                    {lakes.map((d) => <path key={d} d={d} strokeWidth="1.2" vectorEffect="non-scaling-stroke" />)}
                  </g>
                  <g fill="none" stroke="#8fa6ae">
                    {rivers.map((d) => <path key={d} d={d} strokeWidth="1.3" vectorEffect="non-scaling-stroke" />)}
                    {bayCoasts.map((d) => <path key={d} d={d} strokeWidth="1" stroke="#9fb2b9" vectorEffect="non-scaling-stroke" />)}
                  </g>
                </g>
                <line x1="195" y1="344" x2="523" y2="301" stroke="url(#linkLine)" strokeWidth="2.5" />
                <path d="M194 345C186 335 176 324 176 314C176 304 184 298 194 298C204 298 212 304 212 314C212 324 202 335 194 345Z" fill="#a80f00" />
                <ellipse cx="194" cy="315" rx="6.5" ry="5.5" fill="#fff" />
                <g transform="translate(523 272) scale(2.46)">
                  <path d={cloudA} fill={ORANGE} />
                  <path d={cloudB} fill="#fbad41" />
                </g>
                {[
                  { x: 245, y: 385, tx: 266, ty: 393, name: "Tokyo" },
                  { x: 222, y: 460, tx: 242, ty: 467, name: "Kawasaki" },
                  { x: 182, y: 504, tx: 203, ty: 512, name: "Yokohama" },
                  { x: 175, y: 587, tx: 196, ty: 595, name: "Yokosuka" },
                ].map((c) => (
                  <g key={c.name}>
                    <circle cx={c.x} cy={c.y} r="7.5" fill="#fff" stroke="#333" strokeWidth="1.2" />
                    <circle cx={c.x} cy={c.y} r="3.6" fill="#111" />
                    <CityLabel x={c.tx} y={c.ty}>{c.name}</CityLabel>
                  </g>
                ))}
              </MapArt>
              <ZoomControl>
                <ZoomKey>+</ZoomKey>
                <ZoomKey>−</ZoomKey>
              </ZoomControl>
              <MapTip>Tokyo, JP (NRT)</MapTip>
              <MapInfo><MapInfoDot>i</MapInfoDot></MapInfo>
              <MapLogo>
                <MapLogoMark>+</MapLogoMark>
                <MapLogoWord>mapbox</MapLogoWord>
              </MapLogo>
            </MapFrame>
            <FactList>
              <Fact>
                <FactIcon viewBox="0 0 26 26" fill="none" stroke="#000" strokeWidth="1.6">
                  <path d="M13 1l3.2 3.2L13 7.4 9.8 4.2z" fill="#000" />
                  <path d="M13 7v6M4 18v-5H22v5" />
                  <rect x="1" y="18.5" width="6" height="6" />
                  <circle cx="13" cy="21" r="1.3" fill="#000" />
                  <circle cx="22" cy="21.5" r="3" />
                </FactIcon>
                <span>Connected via <b>IPv4</b></span>
              </Fact>
              <Fact>
                <FactIcon viewBox="0 0 26 26" fill="none" stroke="#000" strokeWidth="1.7">
                  <path d="M1 10L5 2.5H21L25 10V14H1Z" />
                  <rect x="1" y="14" width="24" height="9" rx="2" />
                  <path d="M20 18.5h2.5M1 10H25" />
                </FactIcon>
                <span>Server location: <b>Tokyo</b></span>
              </Fact>
              <Fact>
                <FactIcon viewBox="0 0 26 26" fill="none" stroke="#000" strokeWidth="1.6">
                  <path d="M13 25C8 18 4 14 4 9.5A9 8.5 0 0 1 22 9.5C22 14 18 18 13 25Z" />
                  <circle cx="13" cy="9.5" r="3" />
                </FactIcon>
                <span>Your network: <b>Google One VPN (</b><Link>AS36492</Link><b>)</b></span>
              </Fact>
              <Fact>
                <FactIcon viewBox="0 0 26 26" fill="none" stroke="#000" strokeWidth="1.7">
                  <rect x="1" y="3" width="24" height="20" />
                  <path d="M1 8H25" />
                  <path d="M3.5 5.5H9" strokeDasharray="1.4 1" strokeWidth="1.2" />
                </FactIcon>
                <span>Your IP address: <Link>136.23.34.129</Link></span>
              </Fact>
            </FactList>
          </MapCard>
        </Column>

        <Column>
          <SectionTitle>Latency Measurements <Info /></SectionTitle>
          <MeasureCard
            top={32}
            title="Unloaded latency"
            count="(20/20)"
            axis={latencyAxis}
            plot={{
              color: BLUE,
              box: [342, 356],
              whisker: [340, 356],
              mean: 386.5,
              points: [[339, 44], [341, 45], [343, 44], [345, 44], [355, 44], [423, 44], [441, 44], [681, 44]],
            }}
          />
          <MeasureCard
            done={false}
            title="Latency during download"
            count="(20)"
            axis={latencyAxis}
            plot={{
              color: ORANGE,
              box: [343, 352.5],
              whisker: [339, 356],
              mean: 383,
              points: [[341, 44], [344, 45], [349, 44], [353.6, 44], [364, 44], [411, 44], [679, 44], [684, 44]],
            }}
          />
          <MeasureCard
            done={false}
            title="Latency during upload"
            count="(20)"
            axis={latencyAxis}
            plot={{
              color: PURPLE,
              box: [350.5, 455],
              whisker: [340, 462],
              median: 417,
              mean: 426,
              points: [[341.6, 44], [344, 45], [347, 43], [353, 44], [380, 44], [391, 45], [442.5, 44], [451, 44], [456, 44], [461, 45], [680.5, 44]],
            }}
          />
          <SectionTitle $top={66}>Packet Loss Measurements <Info /></SectionTitle>
          <Card $top={32}>
            <CardHead>
              <CardTitle>Packet Loss Test</CardTitle>
            </CardHead>
            <Alert>
              <AlertIcon viewBox="0 0 24 24" fill="none" stroke="#5c0000" strokeWidth="1.3">
                <path d="M12 2L23 22H1Z" />
                <path d="M12 9V16M12 18V19.6" />
              </AlertIcon>
              <span>Unable to perform measurement: ICE connection timeout!</span>
            </Alert>
            <Progress $color="#ddd" $top={26} />
          </Card>
        </Column>
      </Columns>

      <Columns $top={50}>
        <Column>
          <SectionTitle>Download Measurements <Info /></SectionTitle>
          <MeasureCard
            top={32}
            title="100kB download test"
            count="(10/10)"
            axis={downAxis}
            plot={{ color: ORANGE, box: [84, 86.5], mean: 84, points: [[75, 44], [86, 44], [86, 46]] }}
          />
          <MeasureCard
            title="1MB download test"
            count="(8/8)"
            axis={downAxis}
            plot={{
              color: ORANGE,
              box: [217.5, 228],
              whisker: [214, 229.5],
              mean: 214,
              points: [[142, 44], [215, 45], [223, 44], [226, 44], [228, 44]],
            }}
          />
          <MeasureCard
            title="10MB download test"
            count="(6/6)"
            axis={downAxis}
            plot={{
              color: ORANGE,
              box: [654, 675.6],
              whisker: [654, 685],
              median: 664.6,
              mean: 613,
              points: [[334.6, 42], [654.7, 46], [661.5, 41], [666, 47], [674.6, 45], [683.5, 42]],
            }}
          />
        </Column>
        <Column>
          <SectionTitle>Upload Measurements <Info /></SectionTitle>
          <MeasureCard
            top={32}
            title="100kB upload test"
            count="(8/8)"
            axis={upAxis}
            plot={{ color: PURPLE, box: [98.5, 103], mean: 100.5, points: [[83, 43], [98, 44], [101, 44], [102, 45]] }}
          />
          <MeasureCard
            title="1MB upload test"
            count="(6/6)"
            axis={upAxis}
            plot={{
              color: PURPLE,
              box: [177, 454],
              median: 431,
              mean: 353.6,
              points: [[177, 44], [177, 47], [413.7, 41], [445, 47], [451, 44]],
            }}
          />
          <MeasureCard
            title="10MB upload test"
            count="(4/4)"
            axis={upAxis}
            plot={{
              color: PURPLE,
              box: [608, 664],
              whisker: [607, 684.7],
              median: 625.5,
              mean: 636,
              points: [[608, 41], [610, 46], [642, 41], [684.7, 46]],
            }}
          />
        </Column>
      </Columns>

      <Divider $top={48} />
      <Footer>
        <FooterLinks>
          <a>Home</a>
          <a>About</a>
          <a>Privacy Policy</a>
          <a>Terms of Use</a>
        </FooterLinks>
        <FooterLogo>
          <FooterCloud viewBox="0 6.4 24 11.1">
            <path d={cloudA} fill={ORANGE} />
            <path d={cloudB} fill="#fbad41" />
          </FooterCloud>
          <LogoWord>CLOUDFLARE</LogoWord>
        </FooterLogo>
      </Footer>
    </Page>
  );
}
